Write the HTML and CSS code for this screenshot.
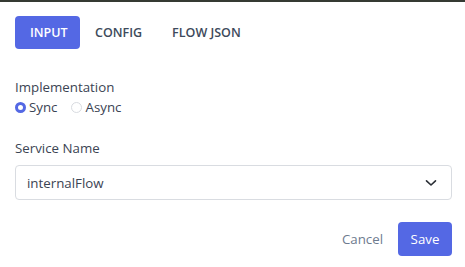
FILE: index.html
```html
<!DOCTYPE html>
<html lang="en">
<head>
    <meta charset="UTF-8">
    <meta name="viewport" content="width=device-width, initial-scale=1.0">
    <title>Flow step</title>
    <link rel="stylesheet" href="styles.css">
</head>
<body>
    <div class="panel">
        <div class="tabs">
            <button class="tab active">INPUT</button>
            <button class="tab">CONFIG</button>
            <button class="tab">FLOW JSON</button>
        </div>

        <div class="field impl">
            <div class="label">Implementation</div>
            <div class="radios">
                <label class="radio"><span class="dot checked"></span>Sync</label>
                <label class="radio"><span class="dot"></span>Async</label>
            </div>
        </div>

        <div class="field service">
            <div class="label">Service Name</div>
            <div class="select">
                <span>internalFlow</span>
                <svg width="12" height="8" viewBox="0 0 12 8"><path d="M1.5 1.8 6 6 10.5 1.8" fill="none" stroke="#2b2f36" stroke-width="1.6" stroke-linecap="round" stroke-linejoin="round"/></svg>
            </div>
        </div>

        <div class="actions">
            <button class="btn-cancel">Cancel</button>
            <button class="btn-save">Save</button>
        </div>
    </div>
</body>
</html>
```

FILE: styles.css
```css
body {
    margin: 0;
    font-family: "Open Sans", "Liberation Sans", sans-serif;
    background: #fff;
    color: #3b4453;
}
.panel {
    border-top: 2px solid #353a33;
    padding: 14px 13px 0 15px;
    height: 251px;
    display: flex;
    flex-direction: column;
}
.tabs {
    display: flex;
    align-items: center;
}
.tab {
    font-family: inherit;
    font-size: 12.5px;
    font-weight: 600;
    color: #3d4a5b;
    background: none;
    border: none;
    height: 33px;
    padding: 0 15px;
    border-radius: 4px;
    cursor: pointer;
}
.tab.active {
    background: #5468e4;
    color: #fff;
    width: 65px;
}
.field .label {
    font-size: 13.3px;
    font-weight: 500;
    line-height: 20px;
    color: #3b4453;
}
.impl {
    margin-top: 28px;
}
.radios {
    display: flex;
    line-height: 20px;
}
.radio {
    display: flex;
    align-items: center;
    font-size: 13.3px;
    font-weight: 500;
    margin-right: 14px;
}
.dot {
    width: 11px;
    height: 11px;
    box-sizing: border-box;
    border-radius: 50%;
    border: 1px solid #d8dbe0;
    margin-right: 3px;
}
.dot.checked {
    border: 3.5px solid #5468e4;
}
.service {
    margin-top: 21px;
}
.select {
    margin-top: 7px;
    height: 35px;
    box-sizing: border-box;
    border: 1px solid #d9dce1;
    border-radius: 4px;
    display: flex;
    align-items: center;
    justify-content: space-between;
    padding: 0 14px 0 11px;
    font-size: 13.3px;
    color: #3b4453;
}
.actions {
    margin-top: 22px;
    display: flex;
    justify-content: flex-end;
    align-items: center;
    gap: 15px;
}
.btn-cancel {
    font-family: inherit;
    font-size: 13.3px;
    color: #6e7b8f;
    background: none;
    border: none;
    padding: 0;
}
.btn-save {
    font-family: inherit;
    font-size: 13.3px;
    font-weight: 500;
    color: #fff;
    background: #5468e4;
    border: none;
    border-radius: 4px;
    width: 54px;
    height: 34px;
}
```
